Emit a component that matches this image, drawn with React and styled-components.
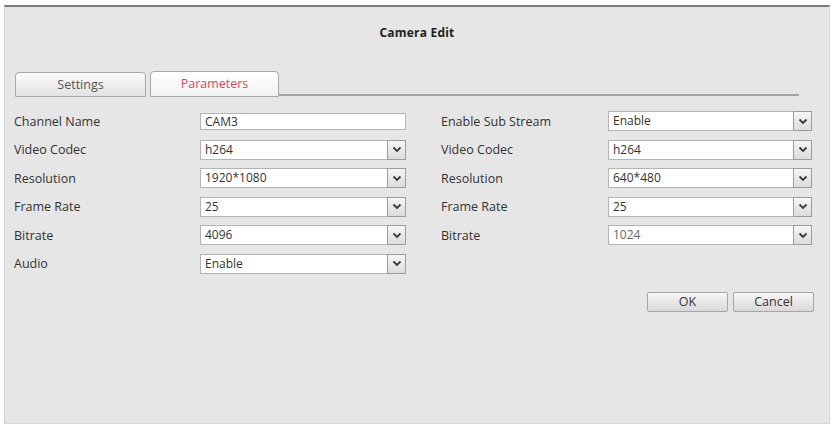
import React from "react";
import styled, { createGlobalStyle } from "styled-components";

const GlobalStyle = createGlobalStyle`
  body {
    margin: 0;
    background: #ffffff;
    font-family: "Open Sans", "Noto Sans", sans-serif;
  }
`;

const Frame = styled.div`
  margin: 5px 10px 0 4px;
  height: 416px;
  background: #e6e6e6;
  border-top: 2px solid #7a7a7a;
  border-left: 1px solid #d2d2d2;
  border-right: 1px solid #d8d8d8;
  border-bottom: 1px solid #d8d8d8;
`;

const Title = styled.div`
  margin-top: 16px;
  height: 20px;
  line-height: 20px;
  text-align: center;
  font-size: 12px;
  font-weight: 700;
  letter-spacing: 0.2px;
  color: #222;
`;

const TabBar = styled.div`
  display: flex;
  align-items: flex-end;
  margin: 29px 0 0 10px;
  width: 784px;
  height: 25px;
`;

const Tab = styled.div`
  box-sizing: border-box;
  width: ${(p) => p.$w}px;
  height: ${(p) => (p.$active ? 26 : 25)}px;
  margin-right: 4px;
  border: 1px solid #a8a8a8;
  border-radius: 4px 4px 0 0;
  background: ${(p) =>
    p.$active
      ? "linear-gradient(#ffffff, #f1f1f1)"
      : "linear-gradient(#fbfbfb, #e2e2e2)"};
  color: ${(p) => (p.$active ? "#d9485e" : "#555")};
  font-size: 12.5px;
  text-align: center;
  line-height: 23px;
`;

const TabLine = styled.div`
  flex: 1;
  margin-left: -4px;
  margin-bottom: 1px;
  border-bottom: 2px solid #a4a4a4;
`;

const Columns = styled.div`
  display: flex;
  margin: 14px 0 0 9px;
  gap: 35px;
`;

const Column = styled.div`
  display: grid;
  grid-template-columns: ${(p) => p.$label}px ${(p) => p.$field}px;
  grid-auto-rows: 20px;
  row-gap: 8.5px;
  align-items: center;
`;

const Label = styled.div`
  font-size: 12.5px;
  color: #333;
`;

const TextInput = styled.div`
  box-sizing: border-box;
  height: 17px;
  border: 1px solid #b4b4b4;
  background: #fff;
  font-size: 12px;
  line-height: 15px;
  padding-left: 4px;
  color: #333;
`;

const Select = styled.div`
  box-sizing: border-box;
  display: flex;
  height: 20px;
  border: 1px solid #b4b4b4;
  background: #fff;
`;

const SelectValue = styled.div`
  flex: 1;
  padding-left: 4px;
  font-size: 12px;
  line-height: 18px;
  color: ${(p) => (p.$dim ? "#666" : "#333")};
`;

const ArrowBox = styled.div`
  box-sizing: border-box;
  width: 19px;
  margin: -1px -1px -1px 0;
  border: 1px solid #9c9c9c;
  background: linear-gradient(#f6f6f6, #dcdcdc);
  display: flex;
  align-items: center;
  justify-content: center;
`;

const ButtonRow = styled.div`
  display: flex;
  justify-content: flex-end;
  gap: 5px;
  width: 809px;
  margin-top: 18px;
`;

const Button = styled.div`
  box-sizing: border-box;
  width: 81px;
  height: 20px;
  border: 1px solid #a6a6a6;
  border-radius: 2px;
  background: linear-gradient(#f7f7f7, #d8d8d8);
  font-size: 12.5px;
  line-height: 18px;
  text-align: center;
  color: #333;
`;

function Chevron() {
  return (
    <svg width="10" height="7" viewBox="0 0 10 7">
      <polyline
        points="1.5,1.5 5,5 8.5,1.5"
        fill="none"
        stroke="#3a3a3a"
        strokeWidth="1.8"
      />
    </svg>
  );
}

function Dropdown({ value, dim }) {
  return (
    <Select>
      <SelectValue $dim={dim}>{value}</SelectValue>
      <ArrowBox>
        <Chevron />
      </ArrowBox>
    </Select>
  );
}

const mainRows = [
  ["Video Codec", "h264"],
  ["Resolution", "1920*1080"],
  ["Frame Rate", "25"],
  ["Bitrate", "4096"],
  ["Audio", "Enable"],
];

const subRows = [
  ["Enable Sub Stream", "Enable"],
  ["Video Codec", "h264"],
  ["Resolution", "640*480"],
  ["Frame Rate", "25"],
  ["Bitrate", "1024", true],
];

export default function App() {
  return (
    <>
      <GlobalStyle />
      <Frame>
        <Title>Camera Edit</Title>
        <TabBar>
          <Tab $w={131}>Settings</Tab>
          <Tab $w={129} $active>
            Parameters
          </Tab>
          <TabLine />
        </TabBar>
        <Columns>
          <Column $label={186} $field={206}>
            <Label>Channel Name</Label>
            <TextInput>CAM3</TextInput>
            {mainRows.map(([label, value]) => (
              <React.Fragment key={label}>
                <Label>{label}</Label>
                <Dropdown value={value} />
              </React.Fragment>
            ))}
          </Column>
          <Column $label={167} $field={204}>
            {subRows.map(([label, value, dim]) => (
              <React.Fragment key={label}>
                <Label>{label}</Label>
                <Dropdown value={value} dim={dim} />
              </React.Fragment>
            ))}
          </Column>
        </Columns>
        <ButtonRow>
          <Button>OK</Button>
          <Button>Cancel</Button>
        </ButtonRow>
      </Frame>
    </>
  );
}
